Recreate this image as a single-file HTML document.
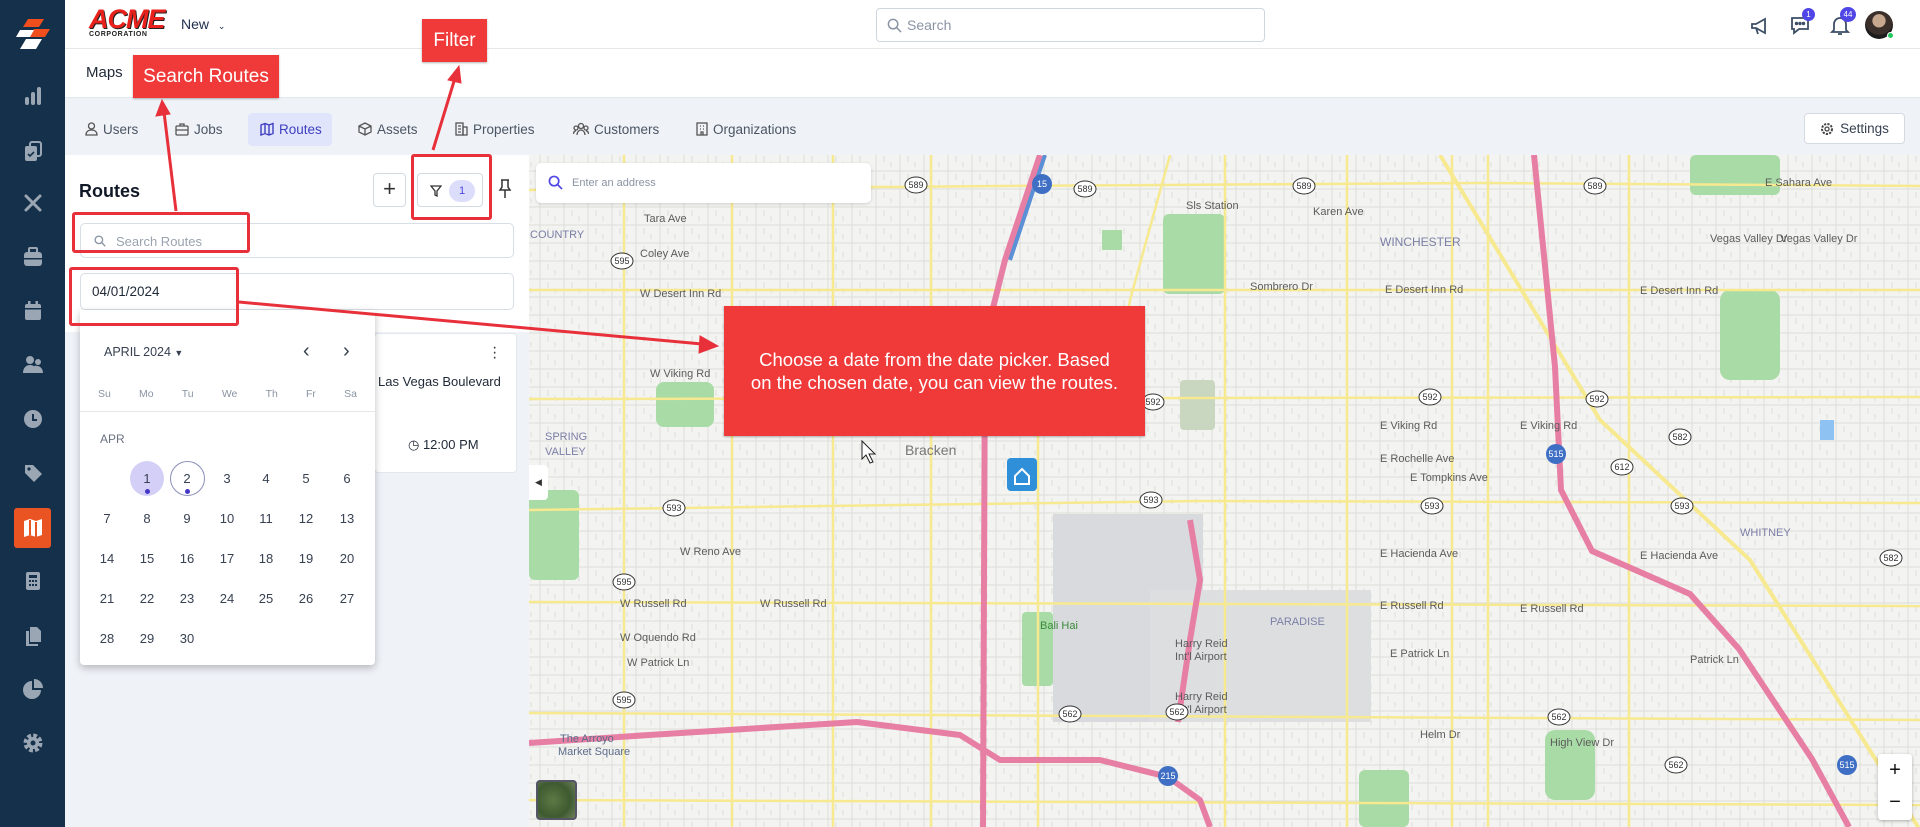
<!DOCTYPE html>
<html><head><meta charset="utf-8">
<style>
*{box-sizing:border-box;margin:0;padding:0}
body{width:1920px;height:827px;overflow:hidden;font-family:"Liberation Sans",sans-serif;background:#fff;position:relative;color:#1f2937}
.abs{position:absolute}
#side{left:0;top:0;width:65px;height:827px;background:#15304a}
.si{position:absolute;left:22px;width:22px;height:22px}
#top{left:65px;top:0;width:1855px;height:49px;border-bottom:1px solid #e5e7eb;background:#fff}
#hdr{left:65px;top:49px;width:1855px;height:49px;border-bottom:1px solid #e3e8ef;background:#fff}
#tabs{left:65px;top:98px;width:1855px;height:57px;background:#eff3f8}
.tab{position:absolute;top:120px;font-size:13.5px;color:#4b5563;display:flex;align-items:center;gap:5px;height:18px}
#panel{left:65px;top:155px;width:464px;height:672px;background:#eff3f8}
#panelw{left:65px;top:155px;width:464px;height:177px;background:#fff}
.inp{position:absolute;border:1px solid #d8dee6;border-radius:5px;background:#fff}
.red{background:#f03a3a;color:#fff;position:absolute;display:flex;align-items:center;justify-content:center;box-shadow:0 1px 2px rgba(0,0,0,.3)}
.ol{position:absolute;border:3px solid #e8303a;border-radius:3px}
.d{position:absolute;width:30px;text-align:center;font-size:13px;color:#374151}
</style></head><body>

<div id="side" class="abs">
<svg class="abs" style="left:14px;top:17px" width="38" height="38" viewBox="0 0 38 38"><polygon points="14,2 30,2 25,10 9,10" fill="#f04e1d"/><polygon points="20,12 36,12 31,20 15,20" fill="#f04e1d"/><polygon points="6,13 20,13 16,20 2,20" fill="#fff"/><polygon points="12,22 28,22 22,32 6,32" fill="#fff"/></svg>
<svg class="si" style="top:85px" viewBox="0 0 22 22" fill="#9aa6b3"><rect x="3" y="12" width="4" height="8" rx="2"/><rect x="9" y="7" width="4" height="13" rx="2"/><rect x="15" y="2" width="4" height="18" rx="2"/></svg>
<svg class="si" style="top:140px" viewBox="0 0 22 22" fill="#9aa6b3"><rect x="3" y="6" width="12" height="15" rx="2"/><rect x="8" y="2" width="11" height="14" rx="2" fill="none" stroke="#9aa6b3" stroke-width="2"/><path d="M6 14l2 2 4-4" stroke="#15304a" stroke-width="1.6" fill="none"/></svg>
<svg class="si" style="top:192px" viewBox="0 0 22 22" stroke="#9aa6b3" stroke-width="3" stroke-linecap="round"><path d="M4 4l14 14M18 4L4 18"/></svg>
<svg class="si" style="top:246px" viewBox="0 0 22 22" fill="#9aa6b3"><rect x="2" y="6" width="18" height="14" rx="3"/><rect x="7" y="2" width="8" height="5" rx="1" fill="none" stroke="#9aa6b3" stroke-width="2"/><rect x="2" y="12" width="18" height="1.5" fill="#15304a"/></svg>
<svg class="si" style="top:300px" viewBox="0 0 22 22" fill="#9aa6b3"><rect x="3" y="4" width="16" height="16" rx="2"/><rect x="6" y="1" width="2.5" height="5"/><rect x="13.5" y="1" width="2.5" height="5"/><rect x="3" y="8" width="16" height="1.5" fill="#15304a"/></svg>
<svg class="si" style="top:354px" viewBox="0 0 22 22" fill="#9aa6b3"><circle cx="8" cy="6" r="4"/><circle cx="16" cy="8" r="3"/><path d="M1 19c0-5 3-8 7-8s7 3 7 8z"/><path d="M14 19c0-4-1-6-2-7 5-1 9 2 9 7z"/></svg>
<svg class="si" style="top:408px" viewBox="0 0 22 22"><circle cx="11" cy="11" r="9" fill="#9aa6b3"/><path d="M11 6v6h4" stroke="#15304a" stroke-width="2" fill="none"/></svg>
<svg class="si" style="top:462px" viewBox="0 0 22 22" fill="#9aa6b3"><path d="M3 3h8l9 9-8 8-9-9z"/><circle cx="7" cy="7" r="1.6" fill="#15304a"/></svg>
<div class="abs" style="left:14px;top:508px;width:37px;height:40px;background:#ea5322;border-radius:3px"></div>
<svg class="si" style="top:517px" viewBox="0 0 22 22" fill="#fff"><path d="M2 4l6-2 6 2 6-2v16l-6 2-6-2-6 2z"/><path d="M8 3v15M14 5v15" stroke="#ea5322" stroke-width="2"/></svg>
<svg class="si" style="top:570px" viewBox="0 0 22 22" fill="#9aa6b3"><rect x="4" y="2" width="14" height="18" rx="2"/><rect x="7" y="5" width="8" height="3" fill="#15304a"/><g fill="#15304a"><rect x="7" y="10" width="2" height="2"/><rect x="10" y="10" width="2" height="2"/><rect x="13" y="10" width="2" height="2"/><rect x="7" y="14" width="2" height="2"/><rect x="10" y="14" width="2" height="2"/><rect x="13" y="14" width="2" height="2"/></g></svg>
<svg class="si" style="top:625px" viewBox="0 0 22 22" fill="#9aa6b3"><path d="M8 2h7l4 4v11H8z"/><path d="M4 6h3v13h9v2H4z"/></svg>
<svg class="si" style="top:678px" viewBox="0 0 22 22" fill="#9aa6b3"><path d="M10 3v9h9a9 9 0 1 1-9-9z"/><path d="M12 1a9 9 0 0 1 9 9h-9z"/></svg>
<svg class="si" style="top:732px" viewBox="0 0 22 22"><circle cx="11" cy="11" r="7" fill="none" stroke="#9aa6b3" stroke-width="5" stroke-dasharray="3.5 2"/><circle cx="11" cy="11" r="6" fill="#9aa6b3"/><circle cx="11" cy="11" r="2.5" fill="#15304a"/></svg>
</div>

<div id="top" class="abs">
<div class="abs" style="left:24px;top:7px;width:72px;height:34px">
<div style="font:900 italic 27px/24px 'Liberation Sans',sans-serif;color:#e8211c;letter-spacing:-1px;text-shadow:1px 1px 0 #222">ACME</div>
<div style="font:bold 7px/8px 'Liberation Sans',sans-serif;color:#222;letter-spacing:.6px">CORPORATION</div></div>
<div class="abs" style="left:116px;top:16px;font-size:14px;color:#1f2d4e">New <span style="font-size:9px;margin-left:5px">&#8964;</span></div>
<div class="abs" style="left:811px;top:8px;width:389px;height:34px;border:1px solid #cfd6df;border-radius:4px">
<svg class="abs" style="left:10px;top:9px" width="15" height="15" viewBox="0 0 16 16" fill="none" stroke="#8a94a3" stroke-width="1.6"><circle cx="6.5" cy="6.5" r="5"/><path d="M10 10l5 5"/></svg>
<span class="abs" style="left:30px;top:8px;font-size:14px;color:#8a94a3">Search</span></div>
<svg class="abs" style="left:1684px;top:15px" width="22" height="22" viewBox="0 0 22 22" fill="none" stroke="#3d4f66" stroke-width="1.8"><path d="M3 9h4l9-5v14l-9-5H3zM7 13l2 6"/></svg>
<svg class="abs" style="left:1724px;top:14px" width="22" height="22" viewBox="0 0 22 22" fill="none" stroke="#3d4f66" stroke-width="1.8"><path d="M3 4h16v11h-9l-5 4v-4H3z"/><circle cx="7.5" cy="9.5" r=".8" fill="#3d4f66"/><circle cx="11" cy="9.5" r=".8" fill="#3d4f66"/><circle cx="14.5" cy="9.5" r=".8" fill="#3d4f66"/></svg>
<div class="abs" style="left:1737px;top:8px;width:13px;height:13px;border-radius:50%;background:#4f46e5;color:#fff;font-size:8px;text-align:center;line-height:13px">1</div>
<svg class="abs" style="left:1764px;top:14px" width="22" height="22" viewBox="0 0 22 22" fill="none" stroke="#3d4f66" stroke-width="1.8"><path d="M5 16V10a6 6 0 0 1 12 0v6l2 2H3zM9 20h4"/></svg>
<div class="abs" style="left:1775px;top:7px;width:16px;height:15px;border-radius:50%;background:#4f46e5;color:#fff;font-size:8px;text-align:center;line-height:15px">44</div>
<div class="abs" style="left:1800px;top:11px;width:28px;height:28px;border-radius:50%;background:radial-gradient(circle at 50% 35%,#c7a88e 0 28%,#3a2f2a 30% 60%,#1c1c1c 62%)"></div>
<div class="abs" style="left:1822px;top:32px;width:7px;height:7px;border-radius:50%;background:#22c55e;border:1px solid #fff"></div>
</div>

<div id="hdr" class="abs"><span class="abs" style="left:21px;top:15px;font-size:15px;color:#1f2937">Maps</span></div>

<div id="tabs" class="abs"></div>
<div class="abs" style="left:248px;top:113px;width:84px;height:33px;background:#e0e5fc;border-radius:4px"></div>
<div class="tab" style="left:85px"><svg width="13" height="14" viewBox="0 0 13 14" fill="none" stroke="#555" stroke-width="1.3"><circle cx="6.5" cy="4" r="3"/><path d="M1 13c0-3 2-5 5.5-5s5.5 2 5.5 5z"/></svg>Users</div>
<div class="tab" style="left:175px"><svg width="14" height="14" viewBox="0 0 14 14" fill="none" stroke="#555" stroke-width="1.3"><rect x="1" y="4" width="12" height="9" rx="1"/><path d="M5 4V2h4v2M1 8h12"/></svg>Jobs</div>
<div class="tab" style="left:260px;color:#3f3fbf"><svg width="14" height="14" viewBox="0 0 14 14" fill="none" stroke="#3f3fbf" stroke-width="1.4"><path d="M1 3l4-1.5 4 1.5 4-1.5v10l-4 1.5-4-1.5-4 1.5zM5 1.5v10M9 3v10"/></svg>Routes</div>
<div class="tab" style="left:358px"><svg width="14" height="14" viewBox="0 0 14 14" fill="none" stroke="#555" stroke-width="1.3"><path d="M7 1l6 3v6l-6 3-6-3V4zM1 4l6 3 6-3M7 7v6"/></svg>Assets</div>
<div class="tab" style="left:455px"><svg width="13" height="14" viewBox="0 0 13 14" fill="none" stroke="#555" stroke-width="1.3"><rect x="1" y="1" width="7" height="12"/><rect x="8" y="5" width="4" height="8"/><path d="M3 4h3M3 7h3M3 10h3"/></svg>Properties</div>
<div class="tab" style="left:573px"><svg width="16" height="14" viewBox="0 0 16 14" fill="none" stroke="#555" stroke-width="1.3"><circle cx="8" cy="4" r="2.5"/><circle cx="3" cy="6" r="2"/><circle cx="13" cy="6" r="2"/><path d="M4 13c0-3 2-5 4-5s4 2 4 5M0.5 12c0-2 1-3 2.5-3M15.5 12c0-2-1-3-2.5-3"/></svg>Customers</div>
<div class="tab" style="left:696px"><svg width="12" height="14" viewBox="0 0 12 14" fill="none" stroke="#555" stroke-width="1.3"><rect x="1" y="1" width="10" height="12"/><path d="M4 4h1M7 4h1M4 7h1M7 7h1M5 13v-3h2v3"/></svg>Organizations</div>
<div class="abs" style="left:1804px;top:113px;width:101px;height:31px;background:#fff;border:1px solid #d4dae2;border-radius:4px;font-size:13.5px;color:#374151;display:flex;align-items:center;justify-content:center;gap:6px"><svg width="14" height="14" viewBox="0 0 14 14" fill="none" stroke="#444" stroke-width="1.3"><circle cx="7" cy="7" r="2"/><circle cx="7" cy="7" r="5" stroke-dasharray="2.2 1.2" stroke-width="2"/></svg>Settings</div>

<div id="panel" class="abs"></div>
<div id="panelw" class="abs"></div>
<div class="abs" style="left:79px;top:181px;font-size:18px;font-weight:bold;color:#111827">Routes</div>
<div class="abs" style="left:373px;top:173px;width:33px;height:34px;border:1px solid #d4dae2;border-radius:4px;background:#fff;text-align:center;font-size:22px;line-height:30px;color:#333">+</div>
<div class="abs" style="left:417px;top:173px;width:66px;height:34px;border:1px solid #d4dae2;border-radius:4px;background:#fff">
<svg class="abs" style="left:12px;top:11px" width="12" height="12" viewBox="0 0 12 12" fill="none" stroke="#333" stroke-width="1.3"><path d="M1 1h10L7 6v5L5 10V6z"/></svg>
<div class="abs" style="left:31px;top:6px;width:26px;height:22px;border-radius:11px;background:#dcdcfb;color:#4f46e5;font-size:11px;text-align:center;line-height:22px">1</div></div>
<svg class="abs" style="left:498px;top:178px" width="14" height="22" viewBox="0 0 14 22" fill="none" stroke="#333" stroke-width="1.5"><path d="M3 2h8M4 2v7l-2 3h10l-2-3V2M7 12v8"/></svg>
<div class="inp" style="left:80px;top:223px;width:434px;height:35px">
<svg class="abs" style="left:13px;top:11px" width="12" height="12" viewBox="0 0 16 16" fill="none" stroke="#8a94a3" stroke-width="1.8"><circle cx="6.5" cy="6.5" r="5"/><path d="M10 10l5 5"/></svg>
<span class="abs" style="left:35px;top:10px;font-size:13px;color:#9aa3b0">Search Routes</span></div>
<div class="inp" style="left:80px;top:273px;width:434px;height:37px"><span class="abs" style="left:11px;top:10px;font-size:13.5px;color:#1f2937">04/01/2024</span></div>

<div class="abs" style="left:374px;top:333px;width:143px;height:140px;background:#fff;border:1px solid #e3e8ef;border-radius:4px"></div>
<div class="abs" style="left:492px;top:345px;width:3px;font-size:16px;line-height:5px;color:#333">·<br>·<br>·</div>
<div class="abs" style="left:378px;top:374px;font-size:13px;color:#1f2937">Las Vegas Boulevard</div>
<div class="abs" style="left:408px;top:437px;font-size:13px;color:#1f2937">&#9719; 12:00 PM</div>

<div class="abs" style="left:80px;top:310px;width:295px;height:355px;background:#fff;box-shadow:0 3px 8px rgba(0,0,0,.25);border-radius:0 0 4px 4px"></div>
<div class="abs" style="left:104px;top:345px;font-size:12.5px;color:#374151">APRIL 2024 <span style="font-size:9px">&#9660;</span></div>
<div class="abs" style="left:303px;top:340px;font-size:20px;color:#374151">&#8249;</div>
<div class="abs" style="left:343px;top:340px;font-size:20px;color:#374151">&#8250;</div>
<div class="abs" style="left:92px;top:388px;width:270px;font-size:10.5px;color:#8a94a3;display:flex;justify-content:space-between;padding:0 5px 0 6px"><span>Su</span><span>Mo</span><span>Tu</span><span>We</span><span>Th</span><span>Fr</span><span>Sa</span></div>
<div class="abs" style="left:80px;top:411px;width:295px;height:1px;background:#e5e7eb"></div>
<div class="abs" style="left:100px;top:432px;font-size:12px;color:#6b7280">APR</div>
<div class="abs" style="left:130px;top:461px;width:34px;height:35px;border-radius:50%;background:#d3cff7"></div>
<div class="abs" style="left:170px;top:461px;width:35px;height:35px;border-radius:50%;border:1px solid #8b8fb8"></div>
<div class="abs" style="left:145px;top:489px;width:5px;height:5px;border-radius:50%;background:#4338ca"></div>
<div class="abs" style="left:185px;top:489px;width:5px;height:5px;border-radius:50%;background:#4338ca"></div>
<div id="cal"></div>

<div class="abs" style="left:529px;top:155px;width:1391px;height:672px;background:#f3f3f1;overflow:hidden">
<svg width="1391" height="672" viewBox="529 155 1391 672" style="position:absolute;left:0;top:0">
<defs><pattern id="st" width="24" height="18" patternUnits="userSpaceOnUse"><path d="M0 9H24M12 0V18M3 0V5M20 12V18" stroke="#dcdcd8" stroke-width="1" fill="none"/></pattern></defs>
<rect x="529" y="155" width="1391" height="672" fill="url(#st)"/>
<g fill="#a9dba6"><rect x="1163" y="214" width="62" height="80" rx="6"/><rect x="656" y="382" width="58" height="45" rx="8"/><rect x="529" y="490" width="50" height="90" rx="6"/><rect x="1022" y="612" width="31" height="74" rx="4"/><rect x="1070" y="335" width="40" height="45" rx="6"/><rect x="1359" y="770" width="50" height="57" rx="6"/><rect x="1545" y="730" width="50" height="70" rx="10"/><rect x="1720" y="290" width="60" height="90" rx="10"/><rect x="1690" y="155" width="90" height="40" rx="6"/><rect x="1102" y="230" width="20" height="20"/><rect x="1180" y="380" width="35" height="50" rx="4" fill="#c9d6c0"/></g>
<rect x="1053" y="514" width="150" height="208" fill="#d8dadd"/><rect x="1150" y="590" width="221" height="132" fill="#dcdee0"/>
<rect x="1820" y="420" width="14" height="20" fill="#8ec2f2"/>
<g stroke="#f7e98f" stroke-width="2.5" fill="none">
<path d="M529 190L1000 186L1480 183L1920 186"/><path d="M529 290L1920 290"/><path d="M529 399L1920 397"/><path d="M529 510L900 505L1200 501L1920 503"/><path d="M529 602L1920 606"/><path d="M529 713L1920 720"/><path d="M529 800L1920 805"/>
<path d="M624 155V827"/><path d="M732 155V827"/><path d="M833 155V827"/><path d="M931 155V827"/><path d="M1038 400V827"/><path d="M1225 155V827"/><path d="M1347 155V827"/><path d="M1452 155V827"/><path d="M1488 155V827"/><path d="M1629 155V827"/>
<path d="M1440 155L1600 420L1750 560L1920 830" stroke-width="4"/><path d="M1170 155L1130 300L1110 420"/></g>
<g stroke="#e77fa4" stroke-width="6" fill="none" stroke-linejoin="round">
<path d="M1040 155L1005 260L985 340L983 827" />
<path d="M1534 155L1555 367L1561 490L1592 551L1690 594L1739 649L1812 759L1849 827"/>
<path d="M529 743L649 735L857 722L960 735L1000 760L1100 760L1168 777L1200 800L1210 827"/>
<path d="M1178 722L1190 640L1200 580L1190 520"/></g>
<path d="M1045 155L1010 260" stroke="#5b8fd6" stroke-width="4"/>
<g font-family="Liberation Sans" font-size="11" fill="#5c5c5c">
<text x="640" y="195">Eldora Ave</text><text x="644" y="222">Tara Ave</text><text x="640" y="257">Coley Ave</text><text x="640" y="297">W Desert Inn Rd</text><text x="650" y="377">W Viking Rd</text><text x="1186" y="209">Sls Station</text><text x="1313" y="215">Karen Ave</text><text x="1250" y="290">Sombrero Dr</text><text x="1385" y="293">E Desert Inn Rd</text><text x="1640" y="294">E Desert Inn Rd</text><text x="1710" y="242">Vegas Valley Dr</text><text x="1780" y="242">Vegas Valley Dr</text><text x="1765" y="186">E Sahara Ave</text><text x="1380" y="429">E Viking Rd</text><text x="1520" y="429">E Viking Rd</text><text x="1380" y="462">E Rochelle Ave</text><text x="1410" y="481">E Tompkins Ave</text><text x="680" y="555">W Reno Ave</text><text x="620" y="607">W Russell Rd</text><text x="760" y="607">W Russell Rd</text><text x="1380" y="557">E Hacienda Ave</text><text x="1640" y="559">E Hacienda Ave</text><text x="1520" y="612">E Russell Rd</text><text x="1380" y="609">E Russell Rd</text><text x="620" y="641">W Oquendo Rd</text><text x="627" y="666">W Patrick Ln</text><text x="1390" y="657">E Patrick Ln</text><text x="1690" y="663">Patrick Ln</text><text x="1420" y="738">Helm Dr</text><text x="1550" y="746">High View Dr</text><text x="905" y="455" font-size="14" fill="#777">Bracken</text><text x="1380" y="246" fill="#7b7fa6" font-size="12">WINCHESTER</text><text x="1270" y="625" fill="#7b7fa6">PARADISE</text><text x="1740" y="536" fill="#7b7fa6">WHITNEY</text><text x="530" y="238" fill="#7b7fa6">COUNTRY</text><text x="545" y="440" fill="#7b7fa6">SPRING</text><text x="545" y="455" fill="#7b7fa6">VALLEY</text><text x="1175" y="647">Harry Reid</text><text x="1175" y="660">Int'l Airport</text><text x="1175" y="700">Harry Reid</text><text x="1175" y="713">Int'l Airport</text><text x="1040" y="629" fill="#3a8a3a">Bali Hai</text><text x="560" y="742" fill="#5c6c8a">The Arroyo</text><text x="558" y="755" fill="#5c6c8a">Market Square</text>
</g>
<g font-family="Liberation Sans" font-size="9" text-anchor="middle" fill="#333">
<g><ellipse cx="916" cy="185" rx="11" ry="8" fill="#fff" stroke="#333"/><text x="916" y="188">589</text></g>
<g><ellipse cx="1085" cy="189" rx="11" ry="8" fill="#fff" stroke="#333"/><text x="1085" y="192">589</text></g>
<g><ellipse cx="1304" cy="186" rx="11" ry="8" fill="#fff" stroke="#333"/><text x="1304" y="189">589</text></g>
<g><ellipse cx="1595" cy="186" rx="11" ry="8" fill="#fff" stroke="#333"/><text x="1595" y="189">589</text></g>
<g><ellipse cx="622" cy="261" rx="11" ry="8" fill="#fff" stroke="#333"/><text x="622" y="264">595</text></g>
<g><ellipse cx="1153" cy="402" rx="11" ry="8" fill="#fff" stroke="#333"/><text x="1153" y="405">592</text></g>
<g><ellipse cx="1430" cy="397" rx="11" ry="8" fill="#fff" stroke="#333"/><text x="1430" y="400">592</text></g>
<g><ellipse cx="1597" cy="399" rx="11" ry="8" fill="#fff" stroke="#333"/><text x="1597" y="402">592</text></g>
<g><ellipse cx="674" cy="508" rx="11" ry="8" fill="#fff" stroke="#333"/><text x="674" y="511">593</text></g>
<g><ellipse cx="1151" cy="500" rx="11" ry="8" fill="#fff" stroke="#333"/><text x="1151" y="503">593</text></g>
<g><ellipse cx="1432" cy="506" rx="11" ry="8" fill="#fff" stroke="#333"/><text x="1432" y="509">593</text></g>
<g><ellipse cx="1682" cy="506" rx="11" ry="8" fill="#fff" stroke="#333"/><text x="1682" y="509">593</text></g>
<g><ellipse cx="1070" cy="714" rx="11" ry="8" fill="#fff" stroke="#333"/><text x="1070" y="717">562</text></g>
<g><ellipse cx="1177" cy="712" rx="11" ry="8" fill="#fff" stroke="#333"/><text x="1177" y="715">562</text></g>
<g><ellipse cx="1559" cy="717" rx="11" ry="8" fill="#fff" stroke="#333"/><text x="1559" y="720">562</text></g>
<g><ellipse cx="1676" cy="765" rx="11" ry="8" fill="#fff" stroke="#333"/><text x="1676" y="768">562</text></g>
<g><ellipse cx="1622" cy="467" rx="11" ry="8" fill="#fff" stroke="#333"/><text x="1622" y="470">612</text></g>
<g><ellipse cx="1680" cy="437" rx="11" ry="8" fill="#fff" stroke="#333"/><text x="1680" y="440">582</text></g>
<g><ellipse cx="1891" cy="558" rx="11" ry="8" fill="#fff" stroke="#333"/><text x="1891" y="561">582</text></g>
<g><ellipse cx="624" cy="582" rx="11" ry="8" fill="#fff" stroke="#333"/><text x="624" y="585">595</text></g>
<g><ellipse cx="624" cy="700" rx="11" ry="8" fill="#fff" stroke="#333"/><text x="624" y="703">595</text></g>
</g>
<g font-family="Liberation Sans" font-size="9" text-anchor="middle" fill="#fff"><circle cx="1556" cy="454" r="10" fill="#3f6fc4"/><text x="1556" y="457">515</text><circle cx="1168" cy="776" r="10" fill="#3f6fc4"/><text x="1168" y="779">215</text><circle cx="1042" cy="184" r="10" fill="#3f6fc4"/><text x="1042" y="187">15</text><circle cx="1847" cy="765" r="10" fill="#3f6fc4"/><text x="1847" y="768">515</text></g>
<rect x="1007" y="458" width="30" height="33" rx="4" fill="#2f8fd8"/><path d="M1015 476l7-7 7 7v8h-14z" fill="none" stroke="#fff" stroke-width="2"/>
</svg>
<div class="abs" style="left:7px;top:8px;width:335px;height:40px;background:#fff;border-radius:5px;box-shadow:0 1px 3px rgba(0,0,0,.15)">
<svg class="abs" style="left:12px;top:12px" width="15" height="15" viewBox="0 0 16 16" fill="none" stroke="#4f46e5" stroke-width="1.8"><circle cx="6.5" cy="6.5" r="5"/><path d="M10 10l5 5"/></svg>
<span class="abs" style="left:36px;top:14px;font-size:11px;color:#8a94a3">Enter an address</span></div>
<div class="abs" style="left:0;top:310px;width:19px;height:35px;background:#fff;border-radius:0 4px 4px 0;font-size:9px;line-height:35px;text-align:center;color:#333">&#9664;</div>
<div class="abs" style="left:7px;top:625px;width:41px;height:40px;border-radius:4px;border:2px solid #556;background:radial-gradient(circle at 40% 50%,#5c7a45,#3e5a30 60%,#6c7f5a)"></div>
<div class="abs" style="left:1349px;top:599px;width:34px;height:66px;background:#fff;border-radius:3px;box-shadow:0 1px 3px rgba(0,0,0,.3);text-align:center;font-size:20px;line-height:32px;color:#111">+<br>&minus;</div>
</div>

<div class="ol" style="left:411px;top:154px;width:81px;height:66px"></div>
<div class="ol" style="left:72px;top:212px;width:178px;height:41px"></div>
<div class="ol" style="left:69px;top:267px;width:170px;height:59px"></div>
<div class="red" style="left:422px;top:19px;width:65px;height:43px;font-size:19px">Filter</div>
<div class="red" style="left:133px;top:55px;width:146px;height:43px;font-size:19px">Search Routes</div>
<div class="red" style="left:724px;top:306px;width:421px;height:130px;font-size:18.5px;line-height:23px;text-align:center">Choose a date from the date picker. Based<br>on the chosen date, you can view the routes.</div>
<svg class="abs" style="left:0;top:0" width="1920" height="827" viewBox="0 0 1920 827">
<g stroke="#e8303a" stroke-width="3" fill="#e8303a">
<path d="M176 211L164 112"/><polygon points="162,100 156,116 170,114" stroke-width="1"/>
<path d="M433 150L455 78"/><polygon points="459,66 448,80 461,83" stroke-width="1"/>
<path d="M239 302L702 344"/><polygon points="718,346 700,336 699,353" stroke-width="1"/>
</g>
<path d="M862 441l0 18 4-4 4 8 3-1-4-8 6 0z" fill="#fff" stroke="#222" stroke-width="1"/>
</svg>

<script>
var c=document.getElementById('cal'),xs=[107,147,187,227,266,306,347],ys=[479,519,559,599,639],h='';
for(var d=1;d<=30;d++){var col=d%7,row=Math.floor(d/7);var x=xs[col]-15,y=ys[row]-8;h+='<div class="d" style="left:'+x+'px;top:'+y+'px">'+d+'</div>';}
c.outerHTML=h;
</script>
</body></html>
